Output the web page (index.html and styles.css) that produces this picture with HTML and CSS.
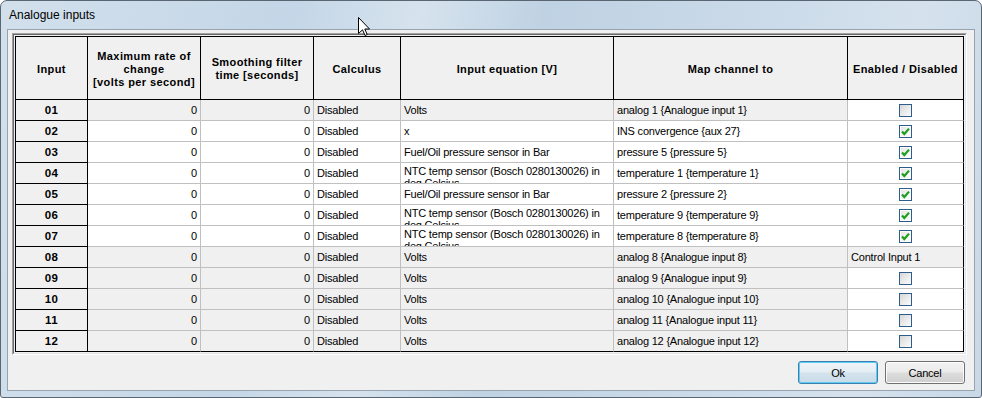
FILE: index.html
```html
<!DOCTYPE html>
<html>
<head>
<meta charset="utf-8">
<title>Analogue inputs</title>
<link rel="stylesheet" href="styles.css">
</head>
<body>
<div class="window">
  <div class="titlebar"><span class="title">Analogue inputs</span></div>
  <div class="client">
    <div class="gridbox">
      <div class="grid">
        <div class="cell hdr">Input</div>
        <div class="cell hdr">Maximum rate of<br>change<br>[volts per second]</div>
        <div class="cell hdr">Smoothing filter<br>time [seconds]</div>
        <div class="cell hdr">Calculus</div>
        <div class="cell hdr">Input equation [V]</div>
        <div class="cell hdr">Map channel to</div>
        <div class="cell hdr">Enabled / Disabled</div>

        <div class="cell rh">01</div>
        <div class="cell g num">0</div>
        <div class="cell g num">0</div>
        <div class="cell g">Disabled</div>
        <div class="cell g">Volts</div>
        <div class="cell g">analog 1 {Analogue input 1}</div>
        <div class="cell lc ctr"><span class="cb"></span></div>

        <div class="cell rh">02</div>
        <div class="cell num">0</div>
        <div class="cell num">0</div>
        <div class="cell">Disabled</div>
        <div class="cell">x</div>
        <div class="cell">INS convergence {aux 27}</div>
        <div class="cell lc ctr"><span class="cb on"><svg viewBox="0 0 11 11" width="11" height="11"><polyline points="2,5.5 4.3,8 9,2.6" fill="none" stroke="#1e9e1e" stroke-width="2.2"/></svg></span></div>

        <div class="cell rh">03</div>
        <div class="cell num">0</div>
        <div class="cell num">0</div>
        <div class="cell">Disabled</div>
        <div class="cell">Fuel/Oil pressure sensor in Bar</div>
        <div class="cell">pressure 5 {pressure 5}</div>
        <div class="cell lc ctr"><span class="cb on"><svg viewBox="0 0 11 11" width="11" height="11"><polyline points="2,5.5 4.3,8 9,2.6" fill="none" stroke="#1e9e1e" stroke-width="2.2"/></svg></span></div>

        <div class="cell rh">04</div>
        <div class="cell num">0</div>
        <div class="cell num">0</div>
        <div class="cell">Disabled</div>
        <div class="cell wrap">NTC temp sensor (Bosch 0280130026) in<br>deg Celsius</div>
        <div class="cell">temperature 1 {temperature 1}</div>
        <div class="cell lc ctr"><span class="cb on"><svg viewBox="0 0 11 11" width="11" height="11"><polyline points="2,5.5 4.3,8 9,2.6" fill="none" stroke="#1e9e1e" stroke-width="2.2"/></svg></span></div>

        <div class="cell rh">05</div>
        <div class="cell num">0</div>
        <div class="cell num">0</div>
        <div class="cell">Disabled</div>
        <div class="cell">Fuel/Oil pressure sensor in Bar</div>
        <div class="cell">pressure 2 {pressure 2}</div>
        <div class="cell lc ctr"><span class="cb on"><svg viewBox="0 0 11 11" width="11" height="11"><polyline points="2,5.5 4.3,8 9,2.6" fill="none" stroke="#1e9e1e" stroke-width="2.2"/></svg></span></div>

        <div class="cell rh">06</div>
        <div class="cell num">0</div>
        <div class="cell num">0</div>
        <div class="cell">Disabled</div>
        <div class="cell wrap">NTC temp sensor (Bosch 0280130026) in<br>deg Celsius</div>
        <div class="cell">temperature 9 {temperature 9}</div>
        <div class="cell lc ctr"><span class="cb on"><svg viewBox="0 0 11 11" width="11" height="11"><polyline points="2,5.5 4.3,8 9,2.6" fill="none" stroke="#1e9e1e" stroke-width="2.2"/></svg></span></div>

        <div class="cell rh">07</div>
        <div class="cell num">0</div>
        <div class="cell num">0</div>
        <div class="cell">Disabled</div>
        <div class="cell wrap">NTC temp sensor (Bosch 0280130026) in<br>deg Celsius</div>
        <div class="cell">temperature 8 {temperature 8}</div>
        <div class="cell lc ctr"><span class="cb on"><svg viewBox="0 0 11 11" width="11" height="11"><polyline points="2,5.5 4.3,8 9,2.6" fill="none" stroke="#1e9e1e" stroke-width="2.2"/></svg></span></div>

        <div class="cell rh">08</div>
        <div class="cell g num">0</div>
        <div class="cell g num">0</div>
        <div class="cell g">Disabled</div>
        <div class="cell g">Volts</div>
        <div class="cell g">analog 8 {Analogue input 8}</div>
        <div class="cell g lc">Control Input 1</div>

        <div class="cell rh">09</div>
        <div class="cell g num">0</div>
        <div class="cell g num">0</div>
        <div class="cell g">Disabled</div>
        <div class="cell g">Volts</div>
        <div class="cell g">analog 9 {Analogue input 9}</div>
        <div class="cell lc ctr"><span class="cb"></span></div>

        <div class="cell rh">10</div>
        <div class="cell g num">0</div>
        <div class="cell g num">0</div>
        <div class="cell g">Disabled</div>
        <div class="cell g">Volts</div>
        <div class="cell g">analog 10 {Analogue input 10}</div>
        <div class="cell lc ctr"><span class="cb"></span></div>

        <div class="cell rh">11</div>
        <div class="cell g num">0</div>
        <div class="cell g num">0</div>
        <div class="cell g">Disabled</div>
        <div class="cell g">Volts</div>
        <div class="cell g">analog 11 {Analogue input 11}</div>
        <div class="cell lc ctr"><span class="cb"></span></div>

        <div class="cell rh lr">12</div>
        <div class="cell g num lr">0</div>
        <div class="cell g num lr">0</div>
        <div class="cell g lr">Disabled</div>
        <div class="cell g lr">Volts</div>
        <div class="cell g lr">analog 12 {Analogue input 12}</div>
        <div class="cell lc lr ctr"><span class="cb"></span></div>
      </div>
    </div>
    <div class="buttons">
      <button class="btn default">Ok</button>
      <button class="btn">Cancel</button>
    </div>
  </div>
  <svg class="cursor" width="13" height="20" viewBox="0 0 13 20"><path d="M0.5 0.5 L0.5 16.5 L4.5 12.8 L7 18.5 L9.2 17.5 L6.8 12 L11.5 12 Z" fill="#fff" stroke="#000" stroke-width="1" stroke-linejoin="miter"/></svg>
</div>
</body>
</html>
```

FILE: styles.css
```css
* { box-sizing: border-box; }
html, body { margin: 0; padding: 0; background: #fff; }
body { font-family: "Liberation Sans", Arial, sans-serif; font-size: 11px; color: #000; }

.window {
  position: relative;
  width: 982px;
  height: 398px;
  border: 1px solid #5b6673;
  border-radius: 7px 7px 3px 3px;
  background: linear-gradient(100deg, #d2e0ec 0%, #c4d6e7 28%, #d6e3ee 40%, #bfd2e3 52%, #c9d9e8 70%, #d5e2ee 88%, #c8d8e7 100%);
  padding: 0 6px 6px 6px;
  display: flex;
  flex-direction: column;
  overflow: hidden;
}

.titlebar {
  height: 28px;
  flex: none;
  display: flex;
  align-items: center;
  padding-left: 2px;
  padding-bottom: 1px;
}
.title {
  font-family: "Liberation Sans", Arial, sans-serif;
  font-size: 12px;
  color: #000;
}

.client {
  flex: 1;
  border: 1px solid #97a3af;
  background: #f0f0f0;
  padding: 3px 7px 6px 4px;
  display: flex;
  flex-direction: column;
}

.gridbox {
  width: 955px;
  height: 322px;
  border: 1px solid;
  border-color: #a0a0a0 #ffffff #ffffff #a0a0a0;
  background: #f0f0f0;
}
.grid {
  margin: 0;
  border: 1px solid;
  border-color: #696969 #e3e3e3 #e3e3e3 #696969;
  padding: 1px;
  display: grid;
  grid-template-columns: 73px 113px 113px 87px 213px 234px 116px;
  grid-auto-rows: 21px;
  grid-template-rows: 64px;
  width: 953px;
  height: 320px;
  background: #f0f0f0;
  align-content: start;
}

.cell {
  border-right: 1px solid #c0c0c0;
  border-bottom: 1px solid #c0c0c0;
  background: #fff;
  padding: 0 3px;
  display: flex;
  align-items: center;
  white-space: nowrap;
  overflow: hidden;
  letter-spacing: -0.2px;
  line-height: 13px;
}
.hdr {
  background: #f0f0f0;
  border-color: #000;
  border-top: 1px solid #000;
  font-weight: bold;
  letter-spacing: 0.4px;
  justify-content: center;
  text-align: center;
  white-space: normal;
  padding-top: 2px;
}
.hdr:first-child { border-left: 1px solid #000; }
.rh {
  background: #f0f0f0;
  border-color: #000;
  border-left: 1px solid #000;
  font-weight: bold;
  font-size: 11.5px;
  letter-spacing: 0.3px;
  justify-content: center;
}
.g { background: #f0f0f0; }
.num { justify-content: flex-end; }
.ctr { justify-content: center; }
.lc { border-right-color: #000; }
.lr { border-bottom-color: #000; }
.wrap {
  align-items: flex-start;
  white-space: normal;
  line-height: 12px;
  padding-top: 2px;
}

.cb {
  width: 13px;
  height: 13px;
  border: 1px solid #2d5d8a;
  background: linear-gradient(135deg, #d6d6d6 0%, #ececec 55%, #fbfbfb 100%);
  display: flex;
  align-items: center;
  justify-content: center;
  margin-top: 1px;
}
.cb.on {
  background: linear-gradient(135deg, #e2e2e2 0%, #f4f4f4 55%, #ffffff 100%);
  box-shadow: inset 0 0 0 1px #ffffff;
}
.cb svg { display: block; }

.buttons {
  margin-top: 6px;
  display: flex;
  justify-content: flex-end;
  gap: 7px;
  padding-right: 2px;
}
.btn {
  width: 80px;
  height: 23px;
  font-family: "Liberation Sans", Arial, sans-serif;
  font-size: 11px;
  letter-spacing: -0.2px;
  color: #000;
  border: 1px solid #707070;
  border-radius: 3px;
  background: linear-gradient(#f2f2f2 0%, #ebebeb 48%, #dddddd 52%, #cfcfcf 100%);
  box-shadow: inset 0 0 0 1px #fcfcfc;
  padding: 0;
}
.btn.default {
  border-color: #3c7fb1;
  background: linear-gradient(#eef5f9 0%, #e3edf3 48%, #d3e3ee 52%, #c9dbe8 100%);
  box-shadow: inset 0 0 0 1px #5ecbf2;
}

.cursor {
  position: absolute;
  left: 357px;
  top: 16px;
}
```
